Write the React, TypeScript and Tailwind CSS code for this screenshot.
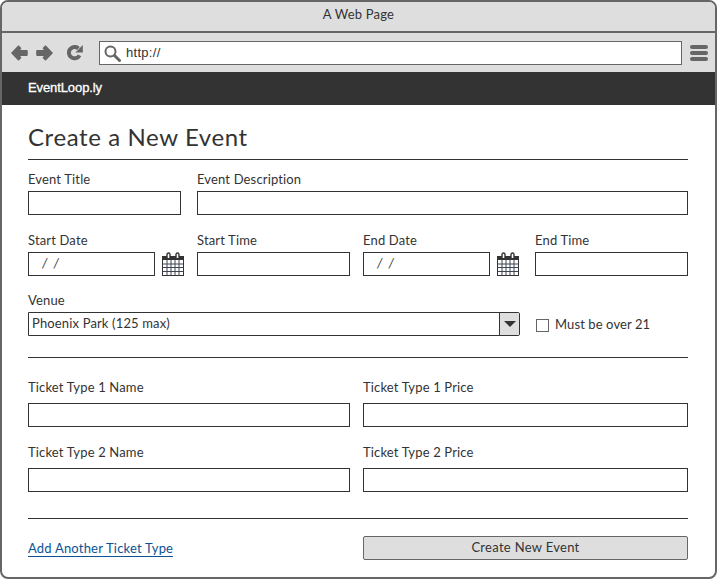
const font = "font-['Lato',sans-serif]";

function Label({ children }: { children: React.ReactNode }) {
    return <div className="h-[16px] text-[13px] leading-[16px] tracking-[0.15px] text-[#333] whitespace-nowrap">{children}</div>;
}

function Box({ className = "", children }: { className?: string; children?: React.ReactNode }) {
    return (
        <div className={`h-[24px] border border-[#333] bg-white flex items-center text-[13px] text-[#333] ${className}`}>
            {children}
        </div>
    );
}

function CalendarIcon() {
    return (
        <svg width="24" height="24" viewBox="0 0 24 24" className="shrink-0">
            <rect x="1.5" y="4.5" width="21" height="19" fill="#fff" stroke="#333" />
            <rect x="1" y="4" width="22" height="4" fill="#333" />
            <path d="M6 6V2.5a1.5 1.5 0 0 1 3 0V6M15 6V2.5a1.5 1.5 0 0 1 3 0V6" fill="#fff" stroke="#333" strokeWidth="1.4" />
            <path d="M1.5 12h21M1.5 15.5h21M1.5 19.5h21M6 8v15M10 8v15M14 8v15M18 8v15" stroke="#3d4652" strokeWidth="1" fill="none" />
        </svg>
    );
}

function BackIcon() {
    return (
        <svg width="17" height="16" viewBox="0 0 17 16" fill="#666" stroke="#666" strokeWidth="1.6" strokeLinejoin="round">
            <path d="M1 8L7.5 1.2L9.5 3.2L7.6 5.9H16V10.1H7.6L9.5 12.8L7.5 14.8z" />
        </svg>
    );
}

function ForwardIcon() {
    return (
        <svg width="17" height="16" viewBox="0 0 17 16" fill="#666" stroke="#666" strokeWidth="1.6" strokeLinejoin="round">
            <path d="M16 8L9.5 1.2L7.5 3.2L9.4 5.9H1V10.1H9.4L7.5 12.8L9.5 14.8z" />
        </svg>
    );
}

function RefreshIcon() {
    return (
        <svg width="16" height="16" viewBox="0 0 16 16" fill="none">
            <path d="M12.6 10.4A5.7 5.7 0 1 1 11.4 3.4" stroke="#666" strokeWidth="4" />
            <path d="M8.4 7.4h7.4V0z" fill="#666" />
        </svg>
    );
}

function SearchIcon() {
    return (
        <svg width="17" height="17" viewBox="0 0 17 17" fill="none" stroke="#666" strokeLinecap="round">
            <circle cx="6.5" cy="6.5" r="5" strokeWidth="2" />
            <path d="M10.5 10.5L15.5 15.5" strokeWidth="3" />
        </svg>
    );
}

function DateField() {
    return (
        <div className="flex items-center gap-[6px]">
            <Box className="w-[127px] pl-[13px] italic">
                <span>/&nbsp;&nbsp;/</span>
            </Box>
            <CalendarIcon />
        </div>
    );
}

function Rule() {
    return <div className="h-px bg-[#333]" />;
}

export default function App() {
    return (
        <div className={`${font} w-[717px] h-[579px] bg-white border-2 border-[#666] rounded-[8px] overflow-hidden flex flex-col`}>
            <div className="h-[29px] shrink-0 bg-[#dedede] border-b-2 border-[#666] box-content flex items-center justify-center text-[13px] leading-[22px] tracking-[0.2px] text-[#333]">
                <span className="-mt-[6px]">A Web Page</span>
            </div>

            <div className="h-[39px] shrink-0 bg-[#dedede] flex items-center pl-[9px] pr-[7px] pt-[1px]">
                <BackIcon />
                <div className="ml-[8px]">
                    <ForwardIcon />
                </div>
                <div className="ml-[14px]">
                    <RefreshIcon />
                </div>
                <div className="ml-[16px] w-[584px] h-[24px] border border-[#666] bg-white flex items-center pl-[4px] text-[13px] text-[#333]">
                    <SearchIcon />
                    <span className="ml-[5px] font-['Liberation_Sans',sans-serif] tracking-[0.3px]">http://</span>
                </div>
                <div className="ml-[8px] flex flex-col gap-[2px]">
                    <div className="w-[18px] h-[4px] rounded-full bg-[#666]" />
                    <div className="w-[18px] h-[4px] rounded-full bg-[#666]" />
                    <div className="w-[18px] h-[4px] rounded-full bg-[#666]" />
                </div>
            </div>

            <div className="h-[33px] shrink-0 bg-[#333] flex items-center pb-[2px] pl-[26px] font-['Liberation_Sans',sans-serif] text-[13px] tracking-[-0.1px] [-webkit-text-stroke:0.3px_white] text-white">
                EventLoop.ly
            </div>

            <div className="pl-[26px] pr-[27px] flex flex-col">
                <h1 className="h-[54px] pt-[15px] text-[24px] leading-[34px] tracking-[0.6px] text-[#333]">Create a New Event</h1>

                <Rule />

                <div className="mt-[11px] flex gap-[16px]">
                    <div className="w-[153px] flex flex-col gap-[4px]">
                        <Label>Event Title</Label>
                        <Box />
                    </div>
                    <div className="flex-1 flex flex-col gap-[4px]">
                        <Label>Event Description</Label>
                        <Box />
                    </div>
                </div>

                <div className="mt-[17px] flex">
                    <div className="w-[169px] flex flex-col gap-[4px]">
                        <Label>Start Date</Label>
                        <DateField />
                    </div>
                    <div className="w-[153px] flex flex-col gap-[4px]">
                        <Label>Start Time</Label>
                        <Box />
                    </div>
                    <div className="ml-[13px] w-[172px] flex flex-col gap-[4px]">
                        <Label>End Date</Label>
                        <DateField />
                    </div>
                    <div className="w-[153px] flex flex-col gap-[4px]">
                        <Label>End Time</Label>
                        <Box />
                    </div>
                </div>

                <div className="mt-[16px] flex items-end">
                    <div className="w-[492px] flex flex-col gap-[4px]">
                        <Label>Venue</Label>
                        <div className="h-[24px] border border-[#333] rounded-r-[2px] bg-white flex items-stretch text-[13px] tracking-[0.15px] text-[#333]">
                            <span className="flex-1 pl-[3px] leading-[21px]">Phoenix Park (125 max)</span>
                            <div className="w-[20px] border-l border-[#333] bg-[#dedede] flex items-center justify-center">
                                <div className="w-0 h-0 border-x-[6px] border-x-transparent border-t-[6px] border-t-[#333]" />
                            </div>
                        </div>
                    </div>
                    <div className="ml-[16px] h-[24px] pt-[2px] flex items-center gap-[6px] text-[13px] tracking-[0.1px] text-[#333]">
                        <div className="w-[13px] h-[13px] border-[1.5px] border-[#666] bg-white" />
                        <span>Must be over 21</span>
                    </div>
                </div>

                <div className="mt-[21px]">
                    <Rule />
                </div>

                <div className="mt-[21px] flex gap-[13px]">
                    <div className="w-[322px] flex flex-col gap-[8px]">
                        <Label>Ticket Type 1 Name</Label>
                        <Box />
                    </div>
                    <div className="flex-1 flex flex-col gap-[8px]">
                        <Label>Ticket Type 1 Price</Label>
                        <Box />
                    </div>
                </div>

                <div className="mt-[17px] flex gap-[13px]">
                    <div className="w-[322px] flex flex-col gap-[8px]">
                        <Label>Ticket Type 2 Name</Label>
                        <Box />
                    </div>
                    <div className="flex-1 flex flex-col gap-[8px]">
                        <Label>Ticket Type 2 Price</Label>
                        <Box />
                    </div>
                </div>

                <div className="mt-[26px]">
                    <Rule />
                </div>

                <div className="mt-[17px] flex items-center gap-[13px]">
                    <div className="w-[322px] -mt-[2px]">
                        <a className="border-b border-[#0b5394] text-[13px] leading-[15px] tracking-[0.2px] text-[#0b5394] inline-block">Add Another Ticket Type</a>
                    </div>
                    <div className="flex-1 h-[24px] border border-[#666] rounded-[2px] bg-[#dedede] flex items-center justify-center text-[13px] tracking-[0.3px] text-[#333]">
                        Create New Event
                    </div>
                </div>
            </div>
        </div>
    );
}
